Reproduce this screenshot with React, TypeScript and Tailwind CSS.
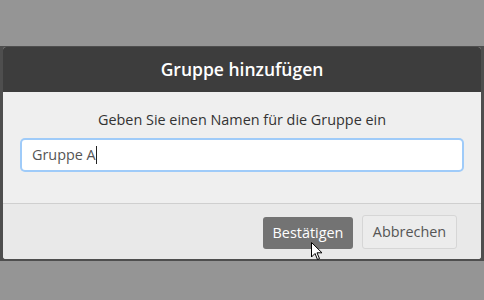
import { useState } from 'react'

export default function App() {
  const [name] = useState('Gruppe A')

  return (
    <div
      className="relative w-[484px] h-[300px] bg-[#959595] pt-[46px]"
      style={{ fontFamily: '"Open Sans", sans-serif' }}
    >
      <div className="bg-[#4e4e4e] px-[3px] pt-[1px] pb-[2px]">
        <div className="rounded-[3px] overflow-hidden bg-[#efefef]">
          <div className="h-[45px] bg-[#3d3d3d] flex items-center justify-center">
            <h1 className="text-white text-[17.5px] font-semibold leading-none">Gruppe hinzufügen</h1>
          </div>

          <div className="px-[17px] pt-[19px] pb-[31px] border-b border-[#cfcfcf]">
            <p className="text-center text-[14.4px] leading-[18px] text-[#333] mb-[9px]">
              Geben Sie einen Namen für die Gruppe ein
            </p>
            <div className="rounded-[5px] p-[2px] bg-[#9fcbf9]">
              <div className="bg-white rounded-[3px] h-[30px] flex items-center px-[10px]">
                <span className="text-[14.4px] text-[#555]">{name}</span>
                <span className="w-px h-[18px] bg-[#222]" />
              </div>
            </div>
          </div>

          <div className="h-[55px] bg-[#e9e9e9] flex items-center justify-end gap-[9px] pr-[24px]">
            <button className="h-[32px] w-[90px] rounded-[3px] bg-[#737373] text-white text-[14.4px] mt-[3px]">
              Bestätigen
            </button>
            <button className="h-[34px] w-[95px] rounded-[3px] border border-[#d6d6d6] bg-[#ececec] text-[#555] text-[14.4px]">
              Abbrechen
            </button>
          </div>
        </div>
      </div>

      <svg className="absolute left-[311px] top-[242px]" width="12" height="19" viewBox="0 0 12 19">
        <path d="M0.5 0.5 L0.5 15 L4 11.5 L6.5 17.5 L8.5 16.6 L6 10.8 L11 10.8 Z" fill="#fff" stroke="#000" strokeWidth="1" />
      </svg>
    </div>
  )
}
